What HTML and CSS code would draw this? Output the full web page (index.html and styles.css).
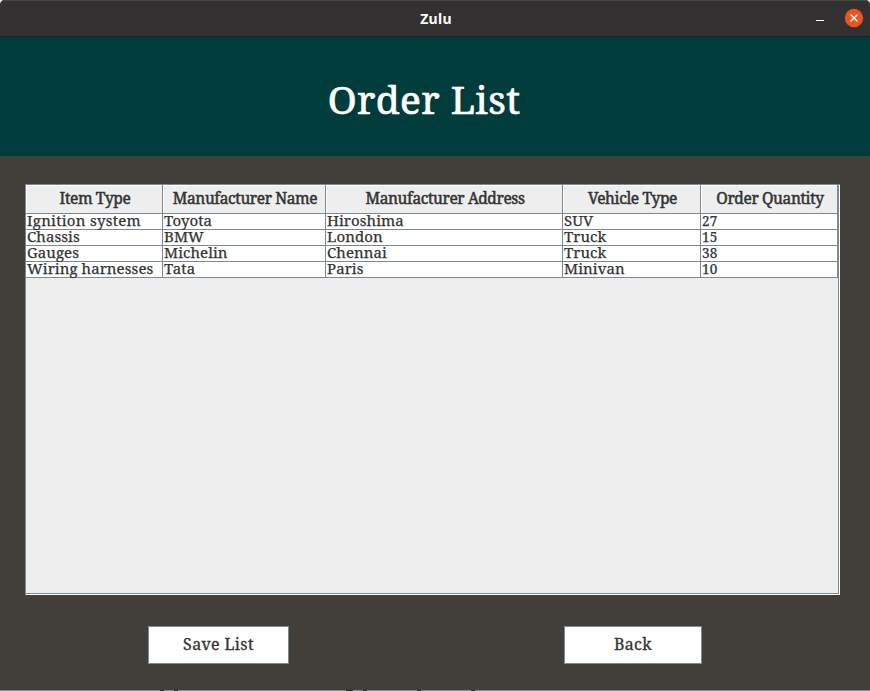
FILE: index.html
```
<!DOCTYPE html>
<html lang="en">
<head>
<meta charset="utf-8">
<title>Zulu</title>
<link rel="stylesheet" href="styles.css">
</head>
<body>
<div class="window">
  <header class="titlebar">
    <span class="app-name">Zulu</span>
    <svg class="controls" width="52" height="24" viewBox="0 0 52 24">
      <rect x="4" y="14" width="8" height="1" fill="#fff"/>
      <circle cx="42" cy="12" r="9.2" fill="#e95420"/>
      <path d="M38.5 8.5l7 7M45.5 8.5l-7 7" stroke="#fff" stroke-width="1.4"/>
    </svg>
  </header>
  <div class="banner"><h1>Order List</h1></div>
  <main>
    <div class="panel">
      <div class="row head">
        <div>Item Type</div><div>Manufacturer Name</div><div>Manufacturer Address</div><div>Vehicle Type</div><div>Order Quantity</div>
      </div>
      <div class="row"><div class="wide">Ignition system</div><div>Toyota</div><div>Hiroshima</div><div>SUV</div><div class="num">27</div></div>
      <div class="row"><div>Chassis</div><div>BMW</div><div>London</div><div>Truck</div><div class="num">15</div></div>
      <div class="row"><div>Gauges</div><div>Michelin</div><div>Chennai</div><div>Truck</div><div class="num">38</div></div>
      <div class="row"><div>Wiring harnesses</div><div>Tata</div><div>Paris</div><div>Minivan</div><div class="num">10</div></div>
    </div>
    <div class="actions">
      <button class="save">Save List</button>
      <button class="back">Back</button>
    </div>
  </main>
  <div class="edge"></div>
</div>
</body>
</html>
```
FILE: styles.css
```
* { box-sizing: border-box; }
body { margin: 0; background: #e8eceb; overflow: hidden; }
.window {
  width: 870px;
  height: 691px;
  display: flex;
  flex-direction: column;
  background: #423e3a;
  border-radius: 5px 5px 0 0;
  overflow: hidden;
  font-family: "Noto Serif", "DejaVu Serif Condensed", "DejaVu Serif", serif;
  color: #333;
}
.titlebar {
  height: 37px;
  display: grid;
  grid-template-columns: 1fr auto 1fr;
  align-items: center;
  background: #333031;
  border-top: 1px solid #474545;
  border-bottom: 1px solid #201e1f;
}
.app-name {
  grid-column: 2;
  padding-left: 2px;
  font: bold 14px/20px "Noto Sans", "Open Sans", sans-serif;
  letter-spacing: 0.3px;
  color: #fff;
}
.controls { justify-self: end; margin-right: 6px; margin-top: -2px; }
.banner {
  height: 119px;
  background: #003c3b;
  display: flex;
  justify-content: center;
  padding: 35px 22px 0 0;
}
h1 {
  margin: 0;
  font-size: 39px;
  font-weight: 400;
  line-height: 54px;
  letter-spacing: 0.4px;
  color: #fff;
  -webkit-text-stroke: 0.7px #fff;
}
main { flex: 1; padding: 28px 30px 0 25px; }
.panel {
  height: 411px;
  background: #eee;
  border: 1px solid #7a8a99;
  border-width: 1px 0 0 1px;
  box-shadow: inset -1px -1px #fff, inset -2px -2px #7a8a99;
}
.row {
  display: grid;
  grid-template-columns: 137px 163px 237px 138px 137px;
  height: 16px;
  width: 812px;
  font-size: 15px;
  line-height: 13px;
  letter-spacing: 0.08px;
  white-space: nowrap;
  -webkit-text-stroke: 0.25px #333;
}
.row > div {
  padding-left: 1px;
  background: #fff;
  border-right: 1px solid #7a8a99;
  border-bottom: 1px solid #7a8a99;
}
.row > .wide { letter-spacing: 0.28px; }
.row > .num { font-size: 13.5px; letter-spacing: 0.1px; line-height: 14px; }
.head {
  height: 29px;
  font-size: 15.5px;
  line-height: 26px;
  letter-spacing: -0.38px;
  text-align: center;
}
.head > div {
  background: #eee;
  padding: 0 0 0 2px;
  box-shadow: inset 1px 1px #fff;
  -webkit-text-stroke: 0.5px #333;
}
.actions { display: flex; padding: 31px 0 0 123px; }
button {
  height: 38px;
  padding: 0 0 3px;
  border: 1px solid #7a8a99;
  background: #fff;
  color: #333;
  font-family: inherit;
  font-size: 16px;
  letter-spacing: 0.35px;
  -webkit-text-stroke: 0.3px #333;
}
.save { width: 141px; }
.back { width: 138px; margin-left: 275px; }
.edge {
  height: 1px;
  background: linear-gradient(90deg, transparent 160px, #2c292c 160px 164px, transparent 164px 174px, #2c292c 174px 178px, transparent 178px 346px, #2c292c 346px 353px, transparent 353px 363px, #2c292c 363px 367px, transparent 367px 417px, #2c292c 417px 421px, transparent 421px 471px, #2c292c 471px 475px, transparent 475px), #8c8885;
}
```
